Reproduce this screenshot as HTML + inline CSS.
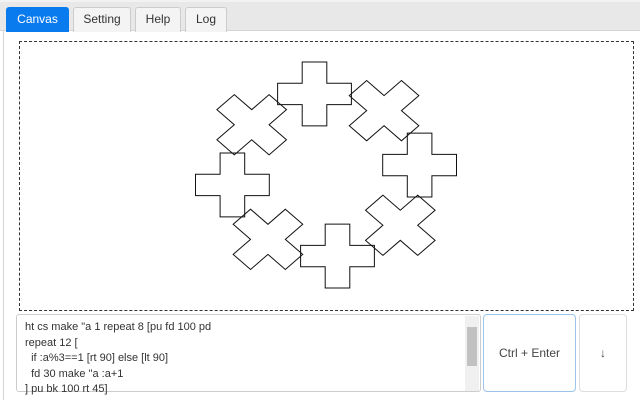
<!DOCTYPE html>
<html><head><style>
*{box-sizing:border-box;margin:0;padding:0}
body{width:640px;height:400px;background:#fff;position:relative;overflow:hidden;font-family:"Liberation Sans",Arial,sans-serif}
.bar{position:absolute;left:0;top:0;width:640px;height:31px;background:#e8e8e8;border-bottom:1px solid #d4d4d4;border-top:2px solid #f2f2f2}
.tab{position:absolute;top:7px;height:25px;border:1px solid #ccc;border-bottom:none;background:#f4f4f4;border-radius:3px 3px 0 0;font-size:12px;color:#333;text-align:center;line-height:23px}
.tab.act{background:#0a7bef;border-color:#0a7bef;color:#fff}
.left{position:absolute;left:3px;top:31px;width:1px;height:369px;background:#d4d4d4}
.dash{position:absolute;left:19px;top:41px;width:615px;height:270px;border:1px dashed #333}
.ta{position:absolute;left:16px;top:314px;width:465px;height:78px;border:1px solid #ccc;border-radius:3px;font-size:11px;color:#333;line-height:15.5px;padding:5px 0 0 8px;white-space:pre}
.sb{position:absolute;left:465px;top:316px;width:14px;height:75px;background:#f0f0f0}
.th{position:absolute;left:467px;top:327px;width:10px;height:39px;background:#c1c1c1}
.btn{position:absolute;top:314px;height:78px;border:1px solid #ddd;border-radius:4px;font-size:12px;color:#444;text-align:center;line-height:76px}
</style></head><body>
<div class="bar"></div>
<div class="tab act" style="left:6px;width:63px">Canvas</div>
<div class="tab" style="left:73px;width:58px">Setting</div>
<div class="tab" style="left:135px;width:46px">Help</div>
<div class="tab" style="left:185px;width:42px">Log</div>
<div class="left"></div>
<div class="dash"></div>
<svg style="position:absolute;left:0;top:0" width="640" height="400">
<defs><polygon id="c" points="-15,-45 15,-45 15,-15 45,-15 45,15 15,15 15,45 -15,45 -15,15 -45,15 -45,-15 -15,-15" fill="none" stroke="#111" stroke-width="1" vector-effect="non-scaling-stroke"/></defs>
<g transform="translate(326,175) scale(0.82,0.71)">
<g transform="rotate(-7) translate(115,0) rotate(7)"><use href="#c"/></g>
<g transform="rotate(38) translate(115,0) rotate(-38) rotate(45)"><use href="#c"/></g>
<g transform="rotate(83) translate(115,0) rotate(-83)"><use href="#c"/></g>
<g transform="rotate(128) translate(115,0) rotate(-128) rotate(45)"><use href="#c"/></g>
<g transform="rotate(173) translate(115,0) rotate(-173)"><use href="#c"/></g>
<g transform="rotate(218) translate(115,0) rotate(-218) rotate(45)"><use href="#c"/></g>
<g transform="rotate(263) translate(115,0) rotate(-263)"><use href="#c"/></g>
<g transform="rotate(308) translate(115,0) rotate(-308) rotate(45)"><use href="#c"/></g>
</g></svg>
<div class="ta">ht cs make "a 1 repeat 8 [pu fd 100 pd
repeat 12 [
  if :a%3==1 [rt 90] else [lt 90]
  fd 30 make "a :a+1
] pu bk 100 rt 45]</div>
<div class="sb"></div><div class="th"></div>
<div class="btn" style="left:483px;width:93px;border-color:#9cc4ea">Ctrl + Enter</div>
<div class="btn" style="left:579px;width:48px">↓</div>
</body></html>
